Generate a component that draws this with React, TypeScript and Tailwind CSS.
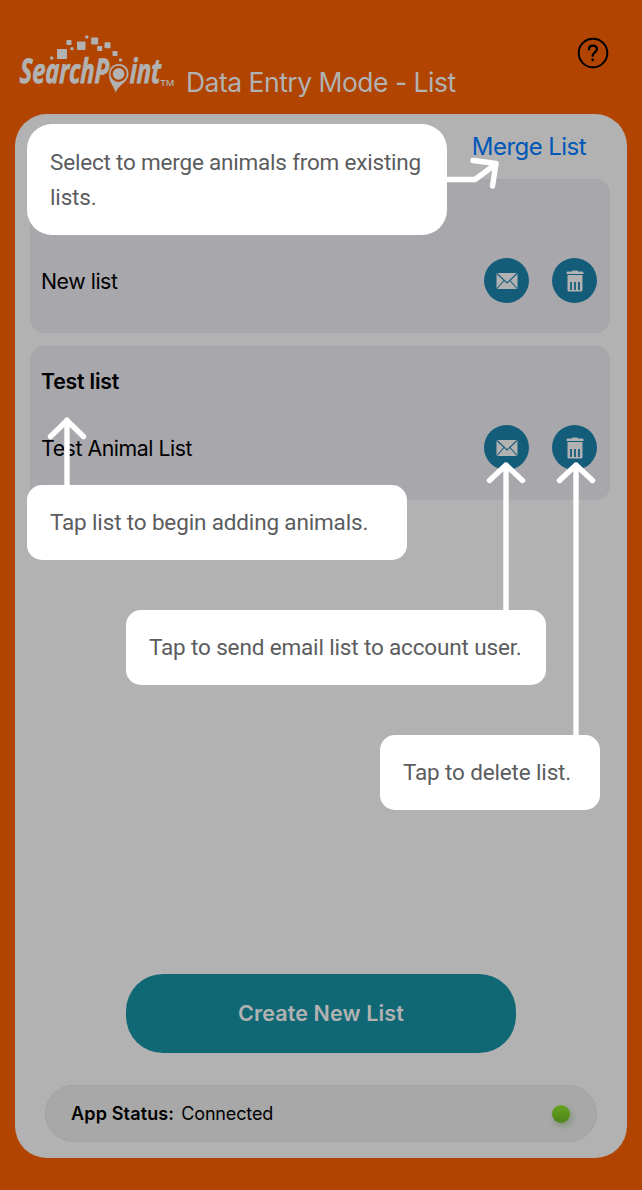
import React from "react";

const inter = "font-['Inter','Liberation_Sans',sans-serif]";

function Logo() {
  const squares = [
    [50.2, 56.6, 3], [57, 49, 10], [66.5, 40, 5], [70.5, 47.3, 3], [77, 41.5, 8.5], [85.3, 35.5, 3],
    [91.2, 37.5, 7], [97.2, 46, 5], [104.5, 42.3, 6], [112.5, 51, 5], [119, 58.5, 3],
  ];
  return (
    <svg className="block" width="186" height="114" viewBox="0 0 186 114" fill="#b2b2b2">
      {squares.map(([x, y, s], i) => (
        <rect key={i} x={x} y={y} width={s} height={s} rx="0.7" />
      ))}
      <g fontFamily="'Open Sans','Noto Sans',sans-serif" fontWeight="700" fontStyle="italic" fontSize="34" stroke="#b2b2b2" strokeWidth="0.8">
        <text transform="translate(19.500 83.400) skewX(-2)" textLength="89" lengthAdjust="spacingAndGlyphs">SearchP</text>
        <text transform="translate(129.500 83.400) skewX(-2)" textLength="31" lengthAdjust="spacingAndGlyphs">int</text>
      </g>
      <path d="M108.8 74.5A10 10 0 1 1 127.2 79C124.5 84 118 86 115.4 93.5C114.5 86 108.8 84 108.8 74.5Z" stroke="#b04400" strokeWidth="0.5" />
      <circle cx="118.6" cy="73.8" r="7" fill="none" stroke="#b04400" strokeWidth="2.3" />
      <text x="160.5" y="86" fontFamily="'Open Sans',sans-serif" fontWeight="600" fontSize="9.5" textLength="14" lengthAdjust="spacingAndGlyphs">TM</text>
    </svg>
  );
}

function MailIcon() {
  return (
    <svg width="22" height="18" viewBox="0 0 22 18">
      <rect x="0.5" y="1" width="21" height="16" rx="1" fill="#b2b2b2" />
      <path d="M1 1.5L11 11L21 1.5M1 16.5L8 8.5M21 16.5L14 8.5" fill="none" stroke="#145d7a" strokeWidth="1.1" />
    </svg>
  );
}

function TrashIcon() {
  return (
    <svg width="18" height="22" viewBox="0 0 18 22">
      <path d="M6 1.5Q6 .4 7 .4H11Q12 .4 12 1.5H16.5Q17.5 1.5 17.5 3V4H.5V3Q.5 1.5 1.5 1.5ZM1.5 5H16.5V20Q16.5 21.6 15 21.6H3Q1.5 21.6 1.5 20Z" fill="#b2b2b2" />
      <path d="M5 12V20M9 12V20M13 12V20" stroke="#145d7a" strokeWidth="1.8" />
    </svg>
  );
}

function RoundButton({ label, children }: { label: string; children: React.ReactNode }) {
  return (
    <button aria-label={label} className="flex size-[45px] items-center justify-center rounded-full bg-[#145d7a]">
      {children}
    </button>
  );
}

function ListCard({ title, children }: { title: string; children: React.ReactNode }) {
  return (
    <section className="flex h-[154px] flex-col rounded-[14px] bg-[#a8a7ac] pl-[11px] pr-[13px] text-[21.3px] text-black">
      <h2 className="mt-[18px] h-[34px] leading-[34px] font-semibold tracking-[-0.2px]">{title}</h2>
      <div className="mt-[27px] flex h-[45px] items-center">
        <p className="flex-1 pt-[2px] tracking-[-0.45px]">{children}</p>
        <div className="flex gap-[23px]">
          <RoundButton label="Email list"><MailIcon /></RoundButton>
          <RoundButton label="Delete list"><TrashIcon /></RoundButton>
        </div>
      </div>
    </section>
  );
}

function Callout({ className, children }: { className: string; children: React.ReactNode }) {
  return (
    <div className={`absolute bg-white pl-[23px] font-['Roboto','Open_Sans',sans-serif] text-[22.5px] leading-[35px] tracking-[-0.15px] whitespace-nowrap text-[#5b5c5e] ${className}`}>
      {children}
    </div>
  );
}

export default function App() {
  return (
    <div className={`relative flex h-[1190px] w-[642px] flex-col overflow-hidden bg-[#b04400] ${inter}`}>
      <header className="flex h-[114px]">
        <Logo />
        <h1 className="mt-[65px] h-[34px] flex-1 text-[26.5px] leading-[34px] tracking-[-0.51px] whitespace-nowrap text-[#b2b2b2]">
          <span>Data Entry Mode - List</span>
        </h1>
        <svg className="mt-[37px] mr-[33px]" width="32" height="32" viewBox="0 0 32 32" fill="none" stroke="#000">
          <circle cx="16" cy="16" r="14.3" strokeWidth="2" />
          <path d="M11.9 12.4C11.9 7.4 20 7.500 20 12.1C20 15.2 15.700 15.5 15.700 18.8" strokeWidth="2.3" strokeLinecap="round" />
          <circle cx="15.7" cy="22.8" r="1.4" fill="#000" stroke="none" />
        </svg>
      </header>

      <main className="mx-[15px] flex h-[1044px] flex-col rounded-[32px] bg-[#b2b2b2]">
        <div className="flex h-[65px] justify-end pt-[16px] pr-[41px] text-[24px] leading-[34px] tracking-[-0.55px] text-[#0057b8]">
          <a className="whitespace-nowrap"><span>Merge List</span></a>
        </div>
        <div className="ml-[15px] flex w-[580px] flex-col gap-[13px]">
          <ListCard title=""><span>New list</span></ListCard>
          <ListCard title="Test list"><span>Test Animal List</span></ListCard>
        </div>
        <button className="mt-[474px] ml-[111px] h-[79px] w-[390px] shrink-0 rounded-[37px] bg-[#106875] text-[21.5px] font-semibold tracking-[0.13px] text-[#b2b2b2]">
          <span>Create New List</span>
        </button>
        <div className="mt-[32px] ml-[30px] flex h-[57px] w-[552px] shrink-0 items-center rounded-full border border-[#a2a2a2] bg-[#a8a8a8] pr-[26px] pl-[25px] text-[18px] text-black">
          <span className="font-semibold tracking-[0.15px]">App Status:</span>
          <span className="ml-[7px] tracking-[-0.15px]">Connected</span>
          <span className="ml-auto size-[18px] rounded-full bg-linear-to-b from-[#64a41e] to-[#50821a] shadow-[2px_3px_6px_#7c9278]" />
        </div>
      </main>

      <svg className="absolute inset-0" width="642" height="1190" fill="none" stroke="#fff" strokeWidth="5.4" strokeLinecap="round" strokeLinejoin="round">
        <path d="M445 179.5H475L496 164M473 160.5L496 163.5L492.5 186" />
        <path d="M67 487V420M50.5 436.5L67 420.500L83.5 436.5" />
        <path d="M506 612V465M489.5 480.5L506 465L522.500 480.5" />
        <path d="M576 737V465M559.500 480.5L576 465L592.5 480.5" />
      </svg>

      <Callout className="top-[124px] left-[27px] h-[111px] w-[420px] rounded-[25px] pt-[21px]">
        <span className="tracking-[-0.2px]">Select to merge animals from existing</span>
        <br />
        <span>lists.</span>
      </Callout>
      <Callout className="top-[485px] left-[27px] h-[75px] w-[380px] rounded-[15px] pt-[20px]">
        <span>Tap list to begin adding animals.</span>
      </Callout>
      <Callout className="top-[610px] left-[126px] h-[75px] w-[420px] rounded-[15px] pt-[20px]">
        <span>Tap to send email list to account user.</span>
      </Callout>
      <Callout className="top-[735px] left-[380px] h-[75px] w-[220px] rounded-[15px] pt-[20px]">
        <span>Tap to delete list.</span>
      </Callout>
    </div>
  );
}
